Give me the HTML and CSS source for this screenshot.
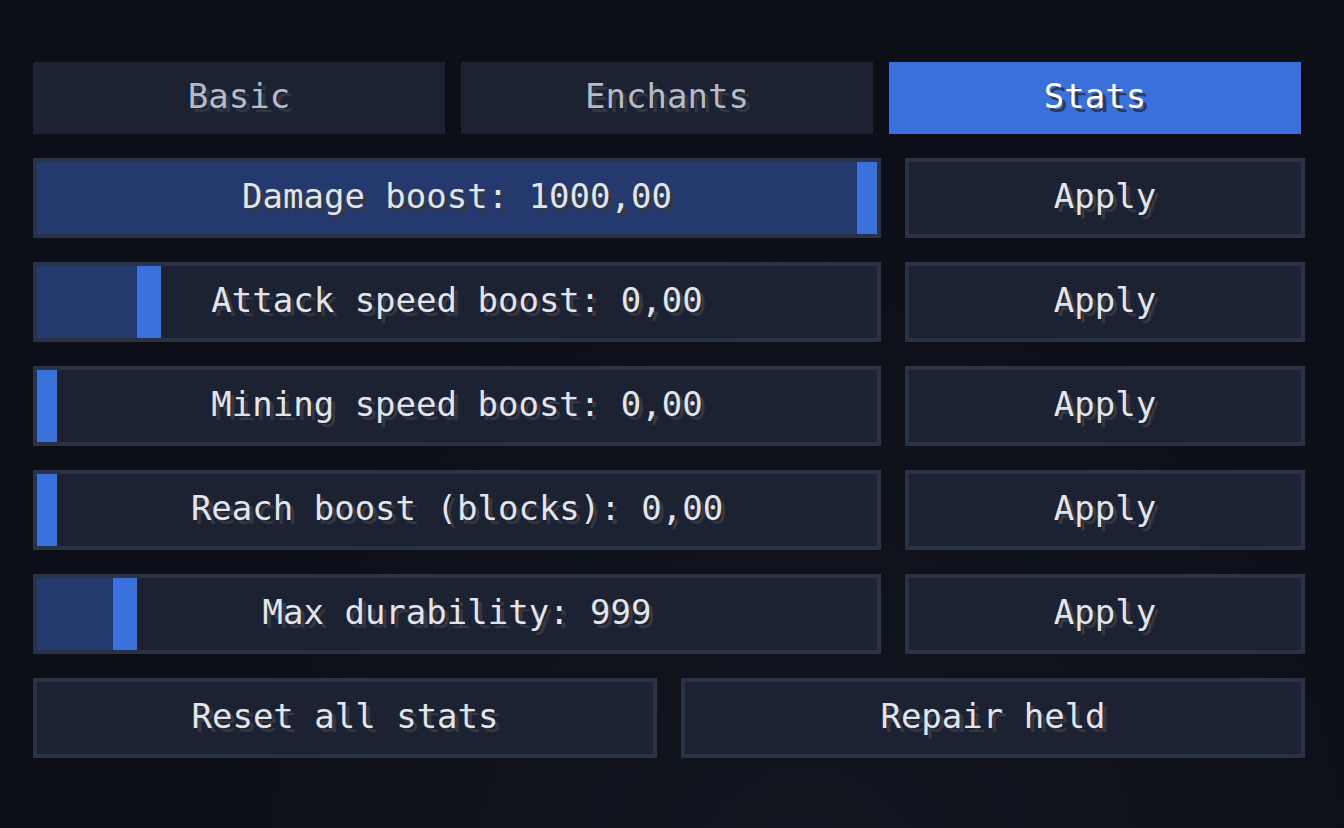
FILE: index.html
```html
<!DOCTYPE html>
<html lang="en">
<head>
    <meta charset="UTF-8">
    <meta name="viewport" content="width=device-width, initial-scale=1.0">
    <title>Item Editor - Stats</title>
    <link rel="stylesheet" href="styles.css">
</head>
<body>

    <!-- tabs -->
    <div class="tabs">
        <div class="tab">Basic</div>
        <div class="tab">Enchants</div>
        <div class="tab active">Stats</div>
    </div>

    <!-- stat sliders -->
    <div class="rows">
        <div class="slider">
            <div class="bar"><div class="fill" style="width: 820px"></div><div class="knob edge"></div></div>
            <div class="label">Damage boost: 1000,00</div>
        </div>
        <div class="btn">Apply</div>

        <div class="slider">
            <div class="bar"><div class="fill" style="width: 100px"></div><div class="knob"></div></div>
            <div class="label">Attack speed boost: 0,00</div>
        </div>
        <div class="btn">Apply</div>

        <div class="slider">
            <div class="bar"><div class="fill" style="width: 0px"></div><div class="knob edge"></div></div>
            <div class="label">Mining speed boost: 0,00</div>
        </div>
        <div class="btn">Apply</div>

        <div class="slider">
            <div class="bar"><div class="fill" style="width: 0px"></div><div class="knob edge"></div></div>
            <div class="label">Reach boost (blocks): 0,00</div>
        </div>
        <div class="btn">Apply</div>

        <div class="slider">
            <div class="bar"><div class="fill" style="width: 76px"></div><div class="knob"></div></div>
            <div class="label">Max durability: 999</div>
        </div>
        <div class="btn">Apply</div>
    </div>

    <!-- bottom actions -->
    <div class="actions">
        <div class="btn">Reset all stats</div>
        <div class="btn">Repair held</div>
    </div>

</body>
</html>
```

FILE: styles.css
```css
body {
    margin: 0;
    min-height: 828px;
    padding: 62px 0 0 33px;
    box-sizing: border-box;
    font-family: "DejaVu Sans Mono", "Liberation Mono", monospace;
    font-size: 34px;
    color: #e1e4f1;
    background-color: #0c0f17;
    background-image: radial-gradient(ellipse at 60% 110%, #121620 0%, #0c0f17 60%);
}

/* tabs */
.tabs {
    display: grid;
    grid-template-columns: repeat(3, 412px);
    gap: 16px;
    margin-bottom: 24px;
}

.tab {
    height: 72px;
    box-sizing: border-box;
    padding-bottom: 4px;
    display: flex;
    align-items: center;
    justify-content: center;
    background-color: #1c2231;
    color: #b4bbca;
    text-shadow: 4px 4px 0 #33363e;
}

.tab.active {
    background-color: #3b6fd9;
    color: #ffffff;
    text-shadow: 4px 4px 0 #2f3a55;
}

/* rows */
.rows {
    display: grid;
    grid-template-columns: 848px 400px;
    column-gap: 24px;
    row-gap: 24px;
    width: 1272px;
}

.slider,
.btn {
    height: 80px;
    box-sizing: border-box;
    border: 4px solid #2a3346;
    background-color: #1d2232;
    text-shadow: 4px 4px 0 #363840;
}

.slider {
    display: grid;
}

.bar,
.label {
    grid-area: 1 / 1;
}

.bar {
    display: flex;
}

.fill {
    background-color: #243a6f;
}

.knob {
    width: 24px;
    background-color: #3b71dc;
}

.knob.edge {
    width: 20px;
}

.label,
.btn {
    display: flex;
    align-items: center;
    justify-content: center;
    white-space: pre;
    padding-bottom: 4px;
}

/* bottom actions */
.actions {
    display: grid;
    grid-template-columns: 624px 624px;
    gap: 24px;
    margin-top: 24px;
}
```
